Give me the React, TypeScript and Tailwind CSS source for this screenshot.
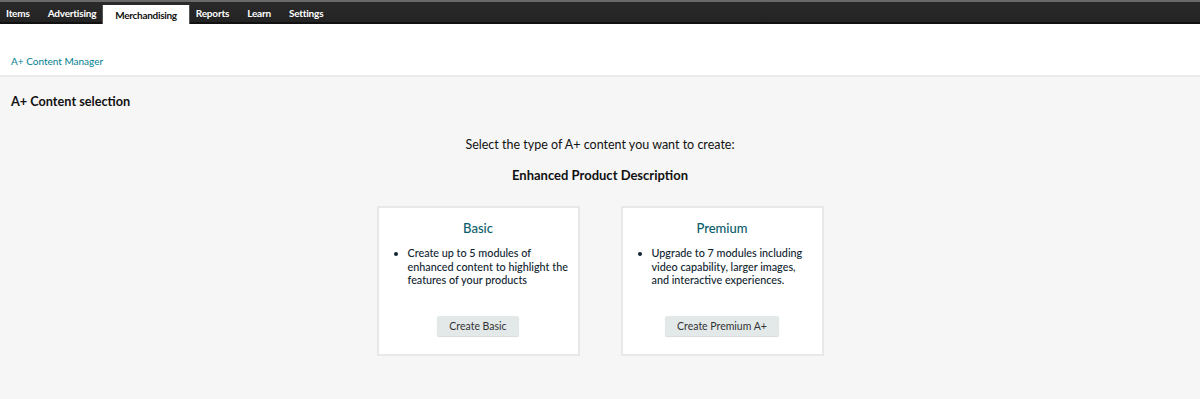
import React from 'react';

const tabs = ['Items', 'Advertising', 'Merchandising', 'Reports', 'Learn', 'Settings'];

const cards = [
  {
    title: 'Basic',
    lines: ['Create up to 5 modules of', 'enhanced content to highlight the', 'features of your products'],
    button: 'Create Basic',
  },
  {
    title: 'Premium',
    lines: ['Upgrade to 7 modules including', 'video capability, larger images,', 'and interactive experiences.'],
    button: 'Create Premium A+',
  },
];

export default function App() {
  return (
    <div className="min-h-[399px] bg-[#f6f6f6] font-['Lato',sans-serif] text-[#111] leading-none">
      {/* Top nav */}
      <div className="h-[24px] border-t-[2px] border-b-[2px] border-t-[#6a6a6a] border-b-[#111] bg-gradient-to-b from-[#2a2a2a] to-[#232323] flex items-end -ml-[3px]">
        {tabs.map(t => (
          <div
            key={t}
            className={
              t === 'Merchandising'
                ? 'h-[19px] -mb-[2px] -mx-[3px] px-[12px] flex items-center bg-white text-[10px] tracking-[-0.3px] font-bold text-[#111] border-x border-[#555]'
                : 'h-[19px] px-[9px] flex items-center text-[10px] tracking-[-0.2px] font-bold text-white'
            }
          >
            {t}
          </div>
        ))}
      </div>

      {/* Breadcrumb */}
      <div className="bg-white pt-[30px] pb-[7px] px-[11px] border-b-[2px] border-[#ebebeb]">
        <a className="block text-[10px] leading-[14px] text-[#00808f]">A+ Content Manager</a>
      </div>

      {/* Content */}
      <div className="px-[11px] pt-[15px] pb-[40px]">
        <h1 className="text-[12.7px] leading-[18px] font-bold">A+ Content selection</h1>
        <div className="mt-[26px] flex flex-col items-center">
          <p className="text-[12.5px] leading-[18px]">Select the type of A+ content you want to create:</p>
          <p className="mt-[12px] text-[13px] leading-[18px] font-bold">Enhanced Product Description</p>
          <div className="mt-[22px] flex gap-[41px]">
            {cards.map(c => (
              <div
                key={c.title}
                className="w-[203px] h-[150px] bg-white border-[2px] border-[#e8e8e8] flex flex-col items-center pt-[11px]"
              >
                <h2 className="text-[13px] leading-[18px] font-medium text-[#0a5d6a]">{c.title}</h2>
                <ul className="mt-[9px] self-stretch pl-[27px] pr-[2px] list-disc text-[10.8px] leading-[13.5px] font-medium text-[#0f2530] marker:text-[#0f2530]">
                  <li className="ml-[2px] whitespace-nowrap">
                    {c.lines.map((l, i) => (
                      <React.Fragment key={i}>
                        {l}
                        {i < c.lines.length - 1 && <br />}
                      </React.Fragment>
                    ))}
                  </li>
                </ul>
                <div className="flex-1" />
                <button className="mb-[18px] h-[20px] px-[12px] bg-[#e3e9e9] text-[10.5px] text-[#333] shadow-[0_1px_1px_rgba(0,0,0,0.15)] rounded-[2px]">
                  {c.button}
                </button>
              </div>
            ))}
          </div>
        </div>
      </div>
    </div>
  );
}
